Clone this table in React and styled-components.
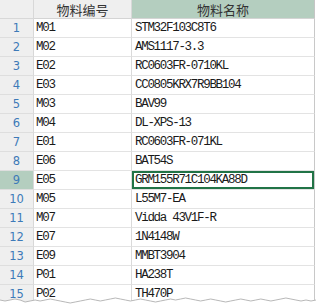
import React from "react";
import styled, { createGlobalStyle } from "styled-components";

const Global = createGlobalStyle`
  html, body { margin: 0; padding: 0; background: #ffffff; }
`;

const Frame = styled.div`
  position: relative;
  width: 316px;
  height: 308px;
  overflow: hidden;
  background: #ffffff;
`;

const Grid = styled.div`
  display: grid;
  grid-template-columns: 34px 98px 183px;
  grid-auto-rows: 19px;
  width: 315px;
`;

const Cell = styled.div`
  box-sizing: border-box;
  height: 19px;
  border-right: 1px solid #dadada;
  border-bottom: 1px solid #e3e3e3;
  display: flex;
  align-items: center;
  white-space: nowrap;
  overflow: hidden;
`;

const Corner = styled(Cell)`
  background: #efefef;
  border-right-color: #d8d8d8;
  border-bottom-color: #d8d8d8;
`;

const ColHead = styled(Cell)`
  justify-content: center;
  background: ${(p) => (p.$active ? "#b4cebf" : "#efefef")};
  border-bottom-color: #d4d4d4;
  border-right-color: ${(p) => (p.$active ? "#c5c5c5" : "#d8d8d8")};
  font-family: "Noto Sans CJK SC", sans-serif;
  font-size: 13px;
  color: #333333;
`;

const RowHead = styled(Cell)`
  justify-content: center;
  background: ${(p) => (p.$active ? "#b4cebf" : "#efefef")};
  border-right-color: #d8d8d8;
  border-bottom-color: #dedede;
  font-family: "DejaVu Sans", sans-serif;
  font-size: 11.5px;
  color: #3d7ab8;
`;

const DataCell = styled(Cell)`
  padding-left: ${(p) => (p.$wide ? "3px" : "2px")};
  font-family: "Liberation Mono", monospace;
  font-size: 12.5px;
  letter-spacing: -1.3px;
  color: #1a1a1a;
  box-shadow: ${(p) => (p.$selected ? "inset 0 0 0 2px #217346" : "none")};
  border-right-color: ${(p) => (p.$last ? "#c8c8c8" : "#dadada")};
`;

const Tear = styled.svg`
  position: absolute;
  left: 0;
  bottom: 0;
  width: 316px;
  height: 14px;
`;

const rows = [
  ["M01", "STM32F103C8T6"],
  ["M02", "AMS1117-3.3"],
  ["E02", "RC0603FR-0710KL"],
  ["E03", "CC0805KRX7R9BB104"],
  ["M03", "BAV99"],
  ["M04", "DL-XPS-13"],
  ["E01", "RC0603FR-071KL"],
  ["E06", "BAT54S"],
  ["E05", "GRM155R71C104KA88D"],
  ["M05", "L55M7-EA"],
  ["M07", "Vidda 43V1F-R"],
  ["E07", "1N4148W"],
  ["E09", "MMBT3904"],
  ["P01", "HA238T"],
  ["P02", "TH470P"],
];

const tearPts = (() => {
  const ys = [6, 7, 6, 5, 6, 8, 7, 6, 7, 6, 5, 6, 7, 8, 9, 8, 7, 6, 5, 6, 7, 6, 5, 4, 5, 6, 7, 6, 5, 6, 7, 8, 7, 6, 5, 6, 5, 4, 5, 6, 7, 6, 5, 6, 7, 8, 7, 6, 5, 6, 7, 6, 5, 6, 7, 6, 5, 4, 5, 6, 7, 6, 7, 6];
  const step = 316 / (ys.length - 1);
  return ys.map((y, i) => `${(i * step).toFixed(1)},${y}`).join(" ");
})();

export default function App() {
  return (
    <Frame>
      <Global />
      <Grid>
        <Corner />
        <ColHead>物料编号</ColHead>
        <ColHead $active>物料名称</ColHead>
        {rows.map(([code, name], i) => {
          const active = i === 8;
          return (
            <React.Fragment key={i}>
              <RowHead $active={active}>{i + 1}</RowHead>
              <DataCell>{code}</DataCell>
              <DataCell $wide $last $selected={active}>{name}</DataCell>
            </React.Fragment>
          );
        })}
      </Grid>
      <Tear viewBox="0 0 316 14">
        <polygon points={`${tearPts} 316,14 0,14`} fill="#ffffff" />
        <polyline points={tearPts} fill="none" stroke="#b8b8b8" strokeWidth="1" />
      </Tear>
    </Frame>
  );
}
